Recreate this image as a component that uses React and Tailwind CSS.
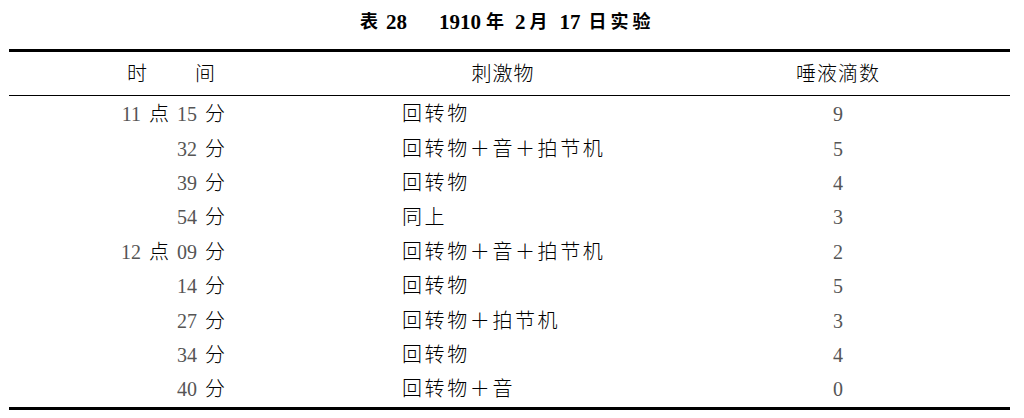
import React from 'react'

const rows = [
  ['11', '15', '回转物', '9'],
  ['', '32', '回转物＋音＋拍节机', '5'],
  ['', '39', '回转物', '4'],
  ['', '54', '同上', '3'],
  ['12', '09', '回转物＋音＋拍节机', '2'],
  ['', '14', '回转物', '5'],
  ['', '27', '回转物＋拍节机', '3'],
  ['', '34', '回转物', '4'],
  ['', '40', '回转物＋音', '0'],
]

const font = { fontFamily: '"Liberation Serif", "Noto Sans CJK SC", serif' }

const App = () => {
  return (
    <div className="w-[1024px] h-[418px] bg-white text-black overflow-hidden" style={font}>
      <div className="h-[49px] flex items-center pl-[360px] pb-[4px] font-bold whitespace-nowrap">
        <span className="text-[18px]">表</span>
        <span className="text-[21px] ml-[8px]">28</span>
        <span className="text-[21px] ml-[32px]">1910</span>
        <span className="text-[18px] ml-[5px]">年</span>
        <span className="text-[21px] ml-[11px]">2</span>
        <span className="text-[18px] ml-[4px]">月</span>
        <span className="text-[21px] ml-[12px]">17</span>
        <span className="text-[18px] ml-[8px] tracking-[4px]">日实验</span>
      </div>
      <div className="ml-[9px] w-[1001px]">
        <div className="border-t-[3px] border-black"></div>
        <div className="h-[44px] grid grid-cols-[324px_340px_330px] items-center text-[20px] font-light border-b border-black">
          <div className="flex justify-center gap-[48px]"><span>时</span><span>间</span></div>
          <div className="text-center tracking-[1px]">刺激物</div>
          <div className="text-center tracking-[1px]">唾液滴数</div>
        </div>
        <div className="pt-[1px]">
          {rows.map((r, i) => (
            <div key={i} className="h-[34.4px] grid grid-cols-[216px_177px_278px_316px] items-center text-[20px] font-light">
              <div className="flex justify-end whitespace-nowrap">
                {r[0] ? (
                  <>
                    <span className="text-[#555]">{r[0]}</span>
                    <span className="ml-[8px]">点</span>
                    <span className="ml-[8px]" />
                  </>
                ) : null}
                <span className="text-[#555]">{r[1]}</span>
                <span className="ml-[8px]">分</span>
              </div>
              <div></div>
              <div className="whitespace-nowrap tracking-[2.6px]">{r[2]}</div>
              <div className="text-center text-[#555]">{r[3]}</div>
            </div>
          ))}
        </div>
        <div className="border-t-[3px] border-black"></div>
      </div>
    </div>
  )
}

export default App
